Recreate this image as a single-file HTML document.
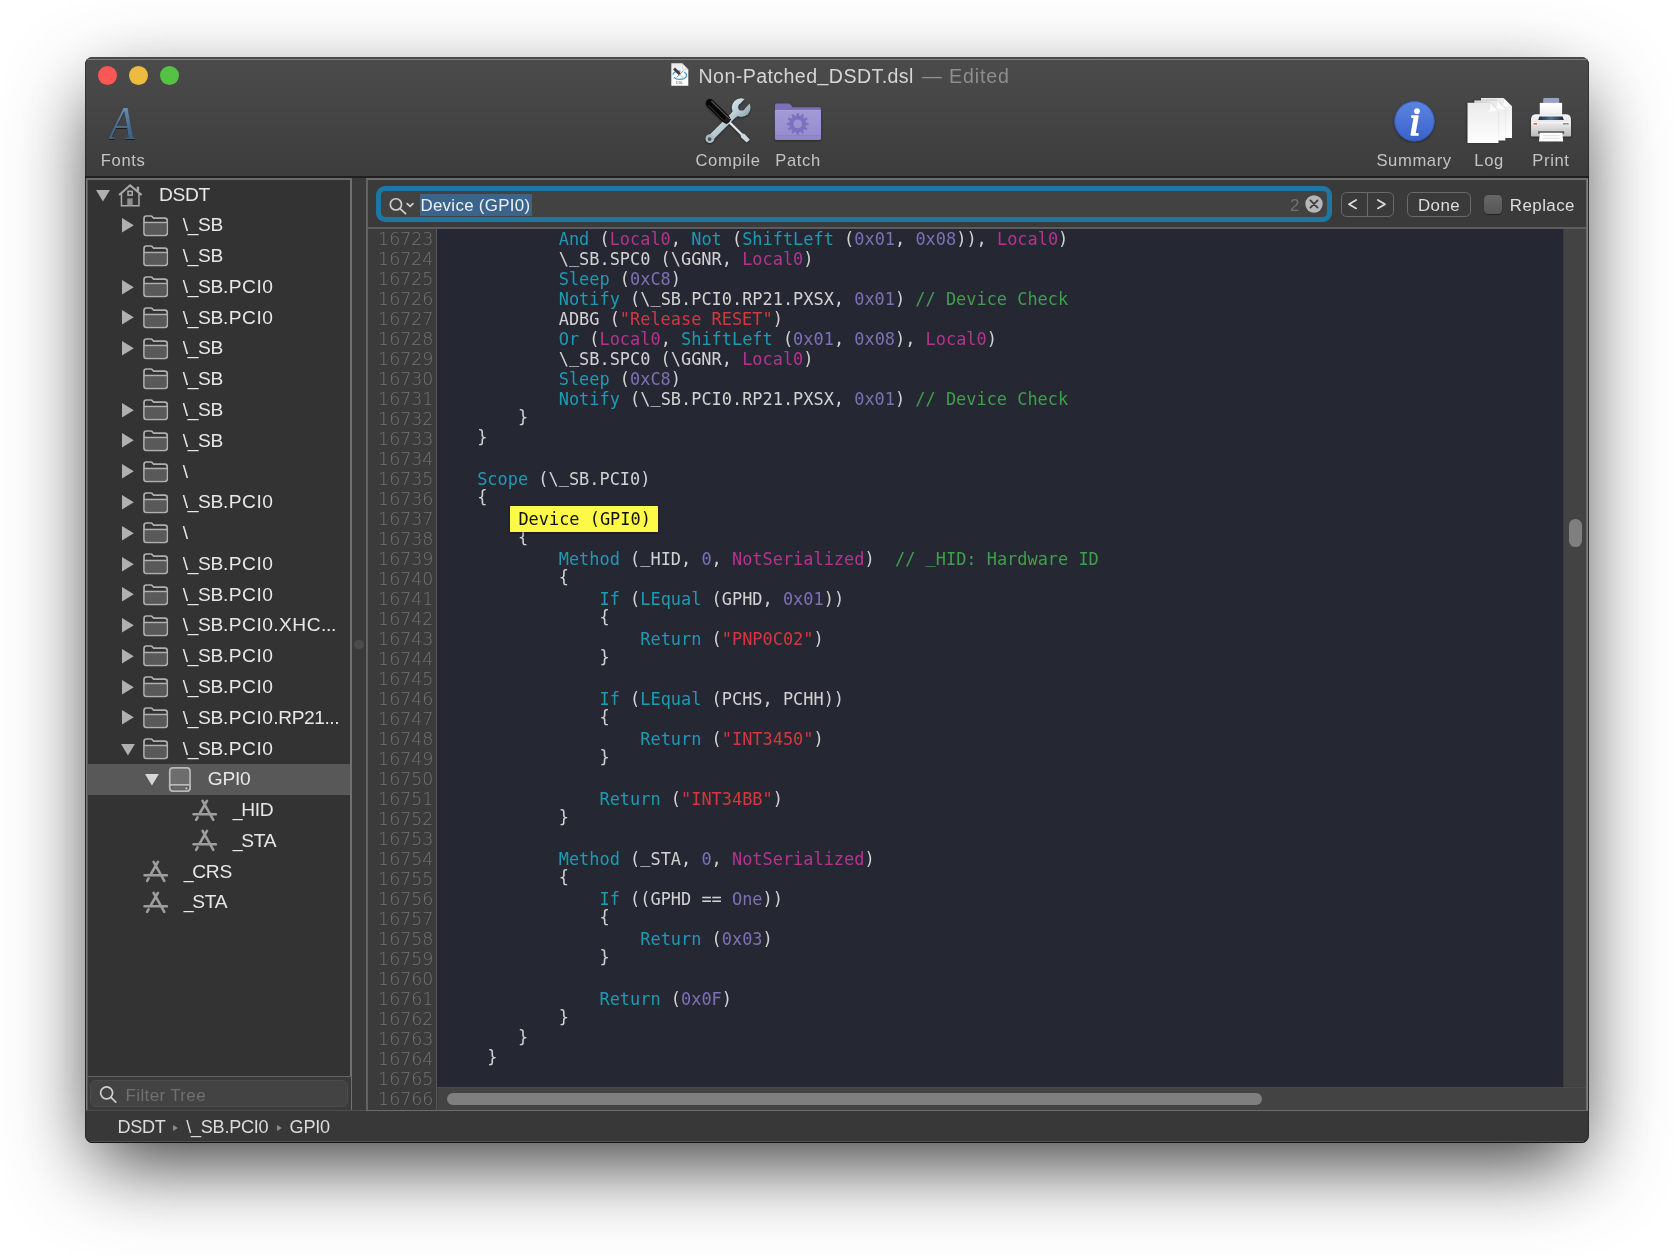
<!DOCTYPE html><html><head><meta charset="utf-8"><title>Non-Patched_DSDT.dsl</title><style>
*{box-sizing:border-box;margin:0;padding:0}
html,body{width:1674px;height:1256px;overflow:hidden;background:#fff}
body{font-family:"Liberation Sans",sans-serif;position:relative;-webkit-font-smoothing:antialiased}
#win{position:absolute;left:84.8px;top:57.2px;width:1504.3px;height:1085.6px;border-radius:7.5px;
 background:#3a3a3a;overflow:hidden;will-change:transform}
#shadow{position:absolute;left:84.8px;top:57.2px;width:1504.3px;height:1085.6px;border-radius:7.5px;
 box-shadow:0 28px 76px -10px rgba(0,0,0,.8)}
#edge{position:absolute;left:0;top:0;right:0;bottom:0;border-radius:7.5px;border:1.1px solid rgba(0,0,0,.28);border-top-color:rgba(0,0,0,.05);border-bottom:1.2px solid rgba(0,0,0,.62);pointer-events:none}
#edge:before{content:"";position:absolute;left:4px;right:4px;bottom:0;height:1px;background:rgba(255,255,255,.13)}
.abs{position:absolute}
#chrome{position:absolute;left:0;top:0;width:100%;height:120px;background:linear-gradient(#4b4b4b 0,#474747 30%,#3c3c3c 100%)}
#chrome:before{content:"";position:absolute;left:0;top:1.7px;right:0;height:1.3px;background:#7c7c7c}
.tl{position:absolute;width:19.2px;height:19.2px;border-radius:50%;top:8.6px;margin-left:-.3px}
.lbl{position:absolute;font-size:16.6px;color:#c4c4c4;white-space:nowrap;letter-spacing:.62px;transform:translateX(-50%);margin-left:.3px}
#title{position:absolute;top:8px;font-size:19.6px;color:#d6d6d6;white-space:nowrap;letter-spacing:.42px}
#title span{color:#8e8e8e;letter-spacing:.85px;margin-left:2.6px}
#title i{font-style:normal;position:relative;top:-2.2px}
/* sidebar */
#side{position:absolute;left:2.7px;top:122.8px;width:263.3px;height:896px;background:#333;}
.row{position:absolute;left:0;width:100%;height:30.78px}
.row .t{position:absolute;top:4.9px;font-size:19.2px;color:#e8e8e8;white-space:nowrap;letter-spacing:-.3px}
.row svg{position:absolute}
.row .w{letter-spacing:.45px}
.row .u{display:inline-block;width:9.6px;transform:scaleX(.92);transform-origin:100% 50%}
.row .w2{letter-spacing:-.45px}
/* code */
#code{position:absolute;background:#252832}
.ln{position:absolute;left:0;height:20px;line-height:20px;font-family:"DejaVu Sans Mono","Liberation Mono",monospace;font-size:16.93px;color:#d2d2d2;white-space:pre}
.ln u{text-decoration:none;position:relative;top:-1.7px}
.k{color:#1d9bb5}.m{color:#b5338f}.n{color:#7d70b6}.s{color:#d5373f}.c{color:#3f9f4c}
.g{position:absolute;right:2.3px;height:20px;line-height:20px;font-family:'DejaVu Sans',sans-serif;font-weight:200;font-size:17.4px;color:#737373;white-space:nowrap}
</style></head><body>
<div id="shadow"></div><div id="win">
<div id="chrome">
<div class="tl" style="left:13.5px;background:#fc5753"></div>
<div class="tl" style="left:44.2px;background:#ecbb3f"></div>
<div class="tl" style="left:75.0px;background:#54c242"></div>
<div id="title" style="left:613.5px">Non-Patched<i>_</i>DSDT.dsl <span>— Edited</span></div>
<div class="lbl" style="left:37.8px;top:94.1px">Fonts</div>
<div class="lbl" style="left:642.8px;top:94.1px">Compile</div>
<div class="lbl" style="left:712.8px;top:94.1px">Patch</div>
<div class="lbl" style="left:1328.8px;top:94.1px">Summary</div>
<div class="lbl" style="left:1403.8px;top:94.1px">Log</div>
<div class="lbl" style="left:1465.7px;top:94.1px">Print</div>
<div class="abs" style="left:24.0px;top:42.5px;font-family:'Liberation Serif',serif;font-style:italic;font-size:46.4px;line-height:48px;transform:scaleX(.93);transform-origin:0 0;background:linear-gradient(#7193b2 12%,#466c8f 55%,#3a5d7f 90%);-webkit-background-clip:text;background-clip:text;color:transparent;filter:drop-shadow(0 1px 0.6px rgba(0,0,0,.55))">A</div>
<svg class="abs" style="left:585.9px;top:6.2px" width="18" height="23" viewBox="0 0 18 23"><defs><linearGradient id="dg" x1="0" y1="0" x2="0" y2="1"><stop offset="0" stop-color="#e9e9e9"/><stop offset=".5" stop-color="#fafafa"/><stop offset="1" stop-color="#fff"/></linearGradient></defs><path d="M.3 .3H11.2L17.3 6.4V22.7H.3Z" fill="url(#dg)"/><path d="M11.2 .3V6.4H17.3Z" fill="#d0d0d0"/><path d="M11.8 1.8V5.8H15.8Z" fill="#f6f6f6"/><ellipse cx="8.7" cy="12.2" rx="6.9" ry="4.2" fill="none" stroke="#3f97d6" stroke-width="1.25" stroke-dasharray="15 3 9 4"/><path d="M3 5.6L9.2 11.4" stroke="#3d3d3d" stroke-width="2.8" stroke-linecap="butt"/><path d="M12.6 7.6L5.6 14.4" stroke="#9a9a9a" stroke-width="1"/><path d="M9.2 12L13.4 16" stroke="#b0b0b0" stroke-width=".8"/><text x="8.7" y="20.6" font-family="Liberation Sans,sans-serif" font-size="3.6" font-weight="bold" fill="#9a9a9a" text-anchor="middle">DSL</text></svg>
<svg class="abs" style="left:619.2px;top:39.8px" width="48" height="48" viewBox="704 97 48 48"><defs><linearGradient id="wg" x1="0" y1="0" x2="1" y2="1"><stop offset="0" stop-color="#d9e8ee"/><stop offset=".55" stop-color="#b6c9d1"/><stop offset="1" stop-color="#8297a1"/></linearGradient><linearGradient id="sg" x1="0" y1="1" x2="1" y2="0"><stop offset="0" stop-color="#8d9aa0"/><stop offset=".5" stop-color="#e4ecef"/><stop offset="1" stop-color="#9aa7ad"/></linearGradient><mask id="wm"><rect x="700" y="90" width="60" height="60" fill="#fff"/><path d="M738.85 105.13L748.26 95.04L753.23 99.68L743.82 109.77Z" fill="#000"/><circle cx="741.61" cy="107.16" r="3.4" fill="#000"/></mask></defs><g filter="drop-shadow(0 1px 0.8px rgba(0,0,0,.45))"><path d="M710 138.6L735.4 113.4" stroke="url(#wg)" stroke-width="6.2" stroke-linecap="round" fill="none"/><path d="M731.6 112.6L736.6 108.4L740.6 112.6L736.4 117.4Z" fill="url(#wg)"/><circle cx="741.2" cy="107.6" r="9.4" fill="url(#wg)" mask="url(#wm)"/><circle cx="709.9" cy="138.7" r="4.4" fill="#a9bcc4"/><circle cx="709.6" cy="139.1" r="1.9" fill="#4a4f52"/><path d="M728.6 121.4L742.6 135.2" stroke="url(#sg)" stroke-width="2.3" fill="none"/><path d="M740.61 134.97L741.23 137.45L746.62 142.52L749.83 139.80L744.65 134.09L742.19 133.43Z" fill="#cfd8dc"/><path d="M710 103.2L726.2 119.2" stroke="#050505" stroke-width="8.4" stroke-linecap="round" fill="none"/><path d="M711.8 101.4L727.6 117" stroke="#4a4a4a" stroke-width="1.5" stroke-linecap="round" fill="none"/><path d="M708.6 105.4L723.8 120.6" stroke="#2c2c2c" stroke-width="1.2" stroke-linecap="round" fill="none"/><path d="M725.6 118.6L728.8 121.8" stroke="#1c1c1c" stroke-width="6.6" stroke-linecap="butt" fill="none"/><path d="M726.2 115.2L730 119" stroke="#5e5e5e" stroke-width="1" fill="none"/></g></svg>
<svg class="abs" style="left:688.2px;top:43.8px" width="50" height="42" viewBox="773 101 50 42"><defs><linearGradient id="pf" x1="0" y1="0" x2="0" y2="1"><stop offset="0" stop-color="#a299d6"/><stop offset=".8" stop-color="#978ecf"/><stop offset="1" stop-color="#8c82c6"/></linearGradient></defs><g filter="drop-shadow(0 1px 0.8px rgba(0,0,0,.4))"><path d="M774.9 105.6Q774.9 103.6 776.9 103.6H788.6Q789.8 103.6 790.6 104.6L792.6 107.3H819.2Q821 107.3 821 109.1V120H774.9Z" fill="#7c70b6"/><rect x="774.9" y="110" width="46.1" height="30.1" rx="1.6" fill="url(#pf)"/><rect x="774.9" y="110" width="46.1" height="1" fill="#aaa2dc" opacity=".8"/><rect x="774.9" y="135.2" width="46.1" height="1" fill="#857bc2" opacity=".7"/></g><path d="M806.00 122.60L808.56 122.92L808.56 124.88L806.00 125.20L805.54 126.93L807.59 128.48L806.61 130.18L804.24 129.17L802.97 130.44L803.98 132.81L802.28 133.79L800.73 131.74L799.00 132.20L798.68 134.76L796.72 134.76L796.40 132.20L794.67 131.74L793.12 133.79L791.42 132.81L792.43 130.44L791.16 129.17L788.79 130.18L787.81 128.48L789.86 126.93L789.40 125.20L786.84 124.88L786.84 122.92L789.40 122.60L789.86 120.87L787.81 119.32L788.79 117.62L791.16 118.63L792.43 117.36L791.42 114.99L793.12 114.01L794.67 116.06L796.40 115.60L796.72 113.04L798.68 113.04L799.00 115.60L800.73 116.06L802.28 114.01L803.98 114.99L802.97 117.36L804.24 118.63L806.61 117.62L807.59 119.32L805.54 120.87Z" fill="#7c71be"/><circle cx="797.7" cy="123.9" r="4.3" fill="#9c93d2"/></svg>
<svg class="abs" style="left:1307.2px;top:41.8px" width="44" height="44" viewBox="1392 99 44 44"><defs><linearGradient id="sb" x1="0" y1="0" x2="0" y2="1"><stop offset="0" stop-color="#5c85df"/><stop offset=".55" stop-color="#4972d6"/><stop offset="1" stop-color="#3a61c6"/></linearGradient></defs><circle cx="1414.5" cy="121.3" r="20.2" fill="url(#sb)" filter="drop-shadow(0 1px 0.8px rgba(0,0,0,.45))"/><circle cx="1414.5" cy="121.3" r="19.7" fill="none" stroke="#2f4fae" stroke-width="1" opacity=".7"/><text x="1414.6" y="135.2" font-family="Liberation Serif,serif" font-style="italic" font-size="41" fill="#fff" stroke="#fff" stroke-width="1.5" stroke-linejoin="round" text-anchor="middle">i</text></svg>
<svg class="abs" style="left:1380.2px;top:37.8px" width="50" height="50" viewBox="1465 95 50 50"><defs><linearGradient id="lp" x1="0" y1="0" x2="0" y2="1"><stop offset="0" stop-color="#eaeaea"/><stop offset=".6" stop-color="#f6f6f6"/><stop offset="1" stop-color="#ffffff"/></linearGradient></defs><g filter="drop-shadow(0 .8px .7px rgba(0,0,0,.4))"><path d="M1481.0 97.9H1503.4L1512.0 106.5V138.1H1481.0Z" fill="url(#lp)"/><path d="M1503.4 97.9V106.5H1512.0Z" fill="#cfcfcf"/><path d="M1503.4 97.9Q1504.6 103.9 1501.2 107.1L1512.0 106.5Z" fill="#fbfbfb"/></g><g filter="drop-shadow(-.6px .6px .9px rgba(0,0,0,.35))"><path d="M1474.3 100.4H1496.7L1505.3 109.0V140.6H1474.3Z" fill="url(#lp)"/><path d="M1496.7 100.4V109.0H1505.3Z" fill="#cfcfcf"/><path d="M1496.7 100.4Q1497.9 106.4 1494.5 109.6L1505.3 109.0Z" fill="#fbfbfb"/></g><g filter="drop-shadow(-.6px .6px .9px rgba(0,0,0,.35))"><path d="M1467.5 102.7H1489.9L1498.5 111.3V142.9H1467.5Z" fill="url(#lp)"/><path d="M1489.9 102.7V111.3H1498.5Z" fill="#cfcfcf"/><path d="M1489.9 102.7Q1491.1 108.7 1487.7 111.9L1498.5 111.3Z" fill="#fbfbfb"/></g></svg>
<svg class="abs" style="left:1443.2px;top:37.8px" width="46" height="50" viewBox="1528 95 46 50"><defs><linearGradient id="pb" x1="0" y1="0" x2="0" y2="1"><stop offset="0" stop-color="#f4f4f4"/><stop offset=".45" stop-color="#e6e6e6"/><stop offset="1" stop-color="#b9b9b9"/></linearGradient><linearGradient id="pp" x1="0" y1="0" x2="0" y2="1"><stop offset="0" stop-color="#ffffff"/><stop offset="1" stop-color="#ececec"/></linearGradient><linearGradient id="ps" x1="0" y1="0" x2="1" y2="0"><stop offset="0" stop-color="#1e2a40"/><stop offset=".5" stop-color="#51709a"/><stop offset="1" stop-color="#1e2a40"/></linearGradient></defs><rect x="1543.2" y="98" width="16" height="6" rx="1" fill="#96a3c2"/><rect x="1539.8" y="102.9" width="22.3" height="15" fill="url(#pp)"/><g filter="drop-shadow(0 1px .8px rgba(0,0,0,.4))"><path d="M1531 135.4V119.4Q1531 114.2 1536.4 114.2H1565.6Q1571 114.2 1571 119.4V135.4Q1571 136.6 1569.8 136.6H1532.2Q1531 136.6 1531 135.4Z" fill="url(#pb)"/></g><path d="M1539.4 116.5H1562.6L1563.8 120H1538.2Z" fill="url(#ps)"/><rect x="1531.4" y="122.2" width="39.2" height="1" fill="#fff" opacity=".7"/><rect x="1533.6" y="123.2" width="3.4" height="1.3" fill="#e8472c"/><rect x="1563" y="123.3" width="5.6" height="1.1" fill="#6b6b6b"/><rect x="1538" y="131.2" width="26.2" height="2.6" fill="#5c5c5c"/><path d="M1539.8 132.8H1562.4L1563.2 141.4H1539Z" fill="#fcfcfc" filter="drop-shadow(0 .8px .6px rgba(0,0,0,.35))"/><path d="M1543 135.6H1559.6M1543 138.4H1559.6" stroke="#dcdcdc" stroke-width=".9"/></svg>
</div>
<div class="abs" style="left:0;top:119.3px;width:100%;height:1.9px;background:#202020"></div>
<div id="side">
<div class="row" style="top:-1.20px">
<svg style="left:8.7px;top:11.2px" width="14" height="12" viewBox="0 0 14 12"><path d="M0 0H13.9L6.95 11.6Z" fill="#b0b0b0"/></svg>
<svg style="left:30.7px;top:5.2px" width="25" height="23.1" viewBox="0 0 26 24" fill="none" stroke="#ababab" stroke-width="1.6"><path d="M1.2 11.4L12.6 1.4L24.6 11.4" stroke-width="2.1"/><path d="M20.7 7.4V2.8" stroke-width="2.4"/><path d="M3.6 10V22.6H21.8V10"/><rect x="10.4" y="7.6" width="4.4" height="4"/><rect x="9.6" y="15" width="5.6" height="7.4" fill="#8e8e8e" stroke="none"/></svg>
<div class="t" style="left:71.3px">DSDT</div>
</div>
<div class="row" style="top:29.58px">
<svg style="left:34.6px;top:8.6px" width="12" height="15" viewBox="0 0 12 15"><path d="M0 0L11.8 7.2L0 14.4Z" fill="#b0b0b0"/></svg>
<svg style="left:55.1px;top:5.2px" width="26" height="22" viewBox="0 0 26 22"><path d="M1 3.4Q1 1 3.4 1H7.6Q8.9 1 9.6 2L10.6 3.2H21.8Q24.2 3.2 24.2 5.6V17.9Q24.2 20.3 21.8 20.3H3.4Q1 20.3 1 17.9Z" fill="#333" stroke="#b0b0b0" stroke-width="1.7"/><path d="M1.8 8.2H23.4V17.6Q23.4 19.5 21.6 19.5H3.6Q1.8 19.5 1.8 17.6Z" fill="#595959"/><path d="M1 7.5H24.2" stroke="#b0b0b0" stroke-width="1.6"/></svg>
<div class="t" style="left:95.0px">\_SB</div>
</div>
<div class="row" style="top:60.36px">
<svg style="left:55.1px;top:5.2px" width="26" height="22" viewBox="0 0 26 22"><path d="M1 3.4Q1 1 3.4 1H7.6Q8.9 1 9.6 2L10.6 3.2H21.8Q24.2 3.2 24.2 5.6V17.9Q24.2 20.3 21.8 20.3H3.4Q1 20.3 1 17.9Z" fill="#333" stroke="#b0b0b0" stroke-width="1.7"/><path d="M1.8 8.2H23.4V17.6Q23.4 19.5 21.6 19.5H3.6Q1.8 19.5 1.8 17.6Z" fill="#595959"/><path d="M1 7.5H24.2" stroke="#b0b0b0" stroke-width="1.6"/></svg>
<div class="t" style="left:95.0px">\_SB</div>
</div>
<div class="row" style="top:91.14px">
<svg style="left:34.6px;top:8.6px" width="12" height="15" viewBox="0 0 12 15"><path d="M0 0L11.8 7.2L0 14.4Z" fill="#b0b0b0"/></svg>
<svg style="left:55.1px;top:5.2px" width="26" height="22" viewBox="0 0 26 22"><path d="M1 3.4Q1 1 3.4 1H7.6Q8.9 1 9.6 2L10.6 3.2H21.8Q24.2 3.2 24.2 5.6V17.9Q24.2 20.3 21.8 20.3H3.4Q1 20.3 1 17.9Z" fill="#333" stroke="#b0b0b0" stroke-width="1.7"/><path d="M1.8 8.2H23.4V17.6Q23.4 19.5 21.6 19.5H3.6Q1.8 19.5 1.8 17.6Z" fill="#595959"/><path d="M1 7.5H24.2" stroke="#b0b0b0" stroke-width="1.6"/></svg>
<div class="t" style="left:95.0px">\_SB<span class="w">.PCI0</span></div>
</div>
<div class="row" style="top:121.92px">
<svg style="left:34.6px;top:8.6px" width="12" height="15" viewBox="0 0 12 15"><path d="M0 0L11.8 7.2L0 14.4Z" fill="#b0b0b0"/></svg>
<svg style="left:55.1px;top:5.2px" width="26" height="22" viewBox="0 0 26 22"><path d="M1 3.4Q1 1 3.4 1H7.6Q8.9 1 9.6 2L10.6 3.2H21.8Q24.2 3.2 24.2 5.6V17.9Q24.2 20.3 21.8 20.3H3.4Q1 20.3 1 17.9Z" fill="#333" stroke="#b0b0b0" stroke-width="1.7"/><path d="M1.8 8.2H23.4V17.6Q23.4 19.5 21.6 19.5H3.6Q1.8 19.5 1.8 17.6Z" fill="#595959"/><path d="M1 7.5H24.2" stroke="#b0b0b0" stroke-width="1.6"/></svg>
<div class="t" style="left:95.0px">\_SB<span class="w">.PCI0</span></div>
</div>
<div class="row" style="top:152.70px">
<svg style="left:34.6px;top:8.6px" width="12" height="15" viewBox="0 0 12 15"><path d="M0 0L11.8 7.2L0 14.4Z" fill="#b0b0b0"/></svg>
<svg style="left:55.1px;top:5.2px" width="26" height="22" viewBox="0 0 26 22"><path d="M1 3.4Q1 1 3.4 1H7.6Q8.9 1 9.6 2L10.6 3.2H21.8Q24.2 3.2 24.2 5.6V17.9Q24.2 20.3 21.8 20.3H3.4Q1 20.3 1 17.9Z" fill="#333" stroke="#b0b0b0" stroke-width="1.7"/><path d="M1.8 8.2H23.4V17.6Q23.4 19.5 21.6 19.5H3.6Q1.8 19.5 1.8 17.6Z" fill="#595959"/><path d="M1 7.5H24.2" stroke="#b0b0b0" stroke-width="1.6"/></svg>
<div class="t" style="left:95.0px">\_SB</div>
</div>
<div class="row" style="top:183.48px">
<svg style="left:55.1px;top:5.2px" width="26" height="22" viewBox="0 0 26 22"><path d="M1 3.4Q1 1 3.4 1H7.6Q8.9 1 9.6 2L10.6 3.2H21.8Q24.2 3.2 24.2 5.6V17.9Q24.2 20.3 21.8 20.3H3.4Q1 20.3 1 17.9Z" fill="#333" stroke="#b0b0b0" stroke-width="1.7"/><path d="M1.8 8.2H23.4V17.6Q23.4 19.5 21.6 19.5H3.6Q1.8 19.5 1.8 17.6Z" fill="#595959"/><path d="M1 7.5H24.2" stroke="#b0b0b0" stroke-width="1.6"/></svg>
<div class="t" style="left:95.0px">\_SB</div>
</div>
<div class="row" style="top:214.26px">
<svg style="left:34.6px;top:8.6px" width="12" height="15" viewBox="0 0 12 15"><path d="M0 0L11.8 7.2L0 14.4Z" fill="#b0b0b0"/></svg>
<svg style="left:55.1px;top:5.2px" width="26" height="22" viewBox="0 0 26 22"><path d="M1 3.4Q1 1 3.4 1H7.6Q8.9 1 9.6 2L10.6 3.2H21.8Q24.2 3.2 24.2 5.6V17.9Q24.2 20.3 21.8 20.3H3.4Q1 20.3 1 17.9Z" fill="#333" stroke="#b0b0b0" stroke-width="1.7"/><path d="M1.8 8.2H23.4V17.6Q23.4 19.5 21.6 19.5H3.6Q1.8 19.5 1.8 17.6Z" fill="#595959"/><path d="M1 7.5H24.2" stroke="#b0b0b0" stroke-width="1.6"/></svg>
<div class="t" style="left:95.0px">\_SB</div>
</div>
<div class="row" style="top:245.04px">
<svg style="left:34.6px;top:8.6px" width="12" height="15" viewBox="0 0 12 15"><path d="M0 0L11.8 7.2L0 14.4Z" fill="#b0b0b0"/></svg>
<svg style="left:55.1px;top:5.2px" width="26" height="22" viewBox="0 0 26 22"><path d="M1 3.4Q1 1 3.4 1H7.6Q8.9 1 9.6 2L10.6 3.2H21.8Q24.2 3.2 24.2 5.6V17.9Q24.2 20.3 21.8 20.3H3.4Q1 20.3 1 17.9Z" fill="#333" stroke="#b0b0b0" stroke-width="1.7"/><path d="M1.8 8.2H23.4V17.6Q23.4 19.5 21.6 19.5H3.6Q1.8 19.5 1.8 17.6Z" fill="#595959"/><path d="M1 7.5H24.2" stroke="#b0b0b0" stroke-width="1.6"/></svg>
<div class="t" style="left:95.0px">\_SB</div>
</div>
<div class="row" style="top:275.82px">
<svg style="left:34.6px;top:8.6px" width="12" height="15" viewBox="0 0 12 15"><path d="M0 0L11.8 7.2L0 14.4Z" fill="#b0b0b0"/></svg>
<svg style="left:55.1px;top:5.2px" width="26" height="22" viewBox="0 0 26 22"><path d="M1 3.4Q1 1 3.4 1H7.6Q8.9 1 9.6 2L10.6 3.2H21.8Q24.2 3.2 24.2 5.6V17.9Q24.2 20.3 21.8 20.3H3.4Q1 20.3 1 17.9Z" fill="#333" stroke="#b0b0b0" stroke-width="1.7"/><path d="M1.8 8.2H23.4V17.6Q23.4 19.5 21.6 19.5H3.6Q1.8 19.5 1.8 17.6Z" fill="#595959"/><path d="M1 7.5H24.2" stroke="#b0b0b0" stroke-width="1.6"/></svg>
<div class="t" style="left:95.0px">\</div>
</div>
<div class="row" style="top:306.60px">
<svg style="left:34.6px;top:8.6px" width="12" height="15" viewBox="0 0 12 15"><path d="M0 0L11.8 7.2L0 14.4Z" fill="#b0b0b0"/></svg>
<svg style="left:55.1px;top:5.2px" width="26" height="22" viewBox="0 0 26 22"><path d="M1 3.4Q1 1 3.4 1H7.6Q8.9 1 9.6 2L10.6 3.2H21.8Q24.2 3.2 24.2 5.6V17.9Q24.2 20.3 21.8 20.3H3.4Q1 20.3 1 17.9Z" fill="#333" stroke="#b0b0b0" stroke-width="1.7"/><path d="M1.8 8.2H23.4V17.6Q23.4 19.5 21.6 19.5H3.6Q1.8 19.5 1.8 17.6Z" fill="#595959"/><path d="M1 7.5H24.2" stroke="#b0b0b0" stroke-width="1.6"/></svg>
<div class="t" style="left:95.0px">\_SB<span class="w">.PCI0</span></div>
</div>
<div class="row" style="top:337.38px">
<svg style="left:34.6px;top:8.6px" width="12" height="15" viewBox="0 0 12 15"><path d="M0 0L11.8 7.2L0 14.4Z" fill="#b0b0b0"/></svg>
<svg style="left:55.1px;top:5.2px" width="26" height="22" viewBox="0 0 26 22"><path d="M1 3.4Q1 1 3.4 1H7.6Q8.9 1 9.6 2L10.6 3.2H21.8Q24.2 3.2 24.2 5.6V17.9Q24.2 20.3 21.8 20.3H3.4Q1 20.3 1 17.9Z" fill="#333" stroke="#b0b0b0" stroke-width="1.7"/><path d="M1.8 8.2H23.4V17.6Q23.4 19.5 21.6 19.5H3.6Q1.8 19.5 1.8 17.6Z" fill="#595959"/><path d="M1 7.5H24.2" stroke="#b0b0b0" stroke-width="1.6"/></svg>
<div class="t" style="left:95.0px">\</div>
</div>
<div class="row" style="top:368.16px">
<svg style="left:34.6px;top:8.6px" width="12" height="15" viewBox="0 0 12 15"><path d="M0 0L11.8 7.2L0 14.4Z" fill="#b0b0b0"/></svg>
<svg style="left:55.1px;top:5.2px" width="26" height="22" viewBox="0 0 26 22"><path d="M1 3.4Q1 1 3.4 1H7.6Q8.9 1 9.6 2L10.6 3.2H21.8Q24.2 3.2 24.2 5.6V17.9Q24.2 20.3 21.8 20.3H3.4Q1 20.3 1 17.9Z" fill="#333" stroke="#b0b0b0" stroke-width="1.7"/><path d="M1.8 8.2H23.4V17.6Q23.4 19.5 21.6 19.5H3.6Q1.8 19.5 1.8 17.6Z" fill="#595959"/><path d="M1 7.5H24.2" stroke="#b0b0b0" stroke-width="1.6"/></svg>
<div class="t" style="left:95.0px">\_SB<span class="w">.PCI0</span></div>
</div>
<div class="row" style="top:398.94px">
<svg style="left:34.6px;top:8.6px" width="12" height="15" viewBox="0 0 12 15"><path d="M0 0L11.8 7.2L0 14.4Z" fill="#b0b0b0"/></svg>
<svg style="left:55.1px;top:5.2px" width="26" height="22" viewBox="0 0 26 22"><path d="M1 3.4Q1 1 3.4 1H7.6Q8.9 1 9.6 2L10.6 3.2H21.8Q24.2 3.2 24.2 5.6V17.9Q24.2 20.3 21.8 20.3H3.4Q1 20.3 1 17.9Z" fill="#333" stroke="#b0b0b0" stroke-width="1.7"/><path d="M1.8 8.2H23.4V17.6Q23.4 19.5 21.6 19.5H3.6Q1.8 19.5 1.8 17.6Z" fill="#595959"/><path d="M1 7.5H24.2" stroke="#b0b0b0" stroke-width="1.6"/></svg>
<div class="t" style="left:95.0px">\_SB<span class="w">.PCI0</span></div>
</div>
<div class="row" style="top:429.72px">
<svg style="left:34.6px;top:8.6px" width="12" height="15" viewBox="0 0 12 15"><path d="M0 0L11.8 7.2L0 14.4Z" fill="#b0b0b0"/></svg>
<svg style="left:55.1px;top:5.2px" width="26" height="22" viewBox="0 0 26 22"><path d="M1 3.4Q1 1 3.4 1H7.6Q8.9 1 9.6 2L10.6 3.2H21.8Q24.2 3.2 24.2 5.6V17.9Q24.2 20.3 21.8 20.3H3.4Q1 20.3 1 17.9Z" fill="#333" stroke="#b0b0b0" stroke-width="1.7"/><path d="M1.8 8.2H23.4V17.6Q23.4 19.5 21.6 19.5H3.6Q1.8 19.5 1.8 17.6Z" fill="#595959"/><path d="M1 7.5H24.2" stroke="#b0b0b0" stroke-width="1.6"/></svg>
<div class="t" style="left:95.0px">\_SB<span class="w">.PCI0.XHC</span>...</div>
</div>
<div class="row" style="top:460.50px">
<svg style="left:34.6px;top:8.6px" width="12" height="15" viewBox="0 0 12 15"><path d="M0 0L11.8 7.2L0 14.4Z" fill="#b0b0b0"/></svg>
<svg style="left:55.1px;top:5.2px" width="26" height="22" viewBox="0 0 26 22"><path d="M1 3.4Q1 1 3.4 1H7.6Q8.9 1 9.6 2L10.6 3.2H21.8Q24.2 3.2 24.2 5.6V17.9Q24.2 20.3 21.8 20.3H3.4Q1 20.3 1 17.9Z" fill="#333" stroke="#b0b0b0" stroke-width="1.7"/><path d="M1.8 8.2H23.4V17.6Q23.4 19.5 21.6 19.5H3.6Q1.8 19.5 1.8 17.6Z" fill="#595959"/><path d="M1 7.5H24.2" stroke="#b0b0b0" stroke-width="1.6"/></svg>
<div class="t" style="left:95.0px">\_SB<span class="w">.PCI0</span></div>
</div>
<div class="row" style="top:491.28px">
<svg style="left:34.6px;top:8.6px" width="12" height="15" viewBox="0 0 12 15"><path d="M0 0L11.8 7.2L0 14.4Z" fill="#b0b0b0"/></svg>
<svg style="left:55.1px;top:5.2px" width="26" height="22" viewBox="0 0 26 22"><path d="M1 3.4Q1 1 3.4 1H7.6Q8.9 1 9.6 2L10.6 3.2H21.8Q24.2 3.2 24.2 5.6V17.9Q24.2 20.3 21.8 20.3H3.4Q1 20.3 1 17.9Z" fill="#333" stroke="#b0b0b0" stroke-width="1.7"/><path d="M1.8 8.2H23.4V17.6Q23.4 19.5 21.6 19.5H3.6Q1.8 19.5 1.8 17.6Z" fill="#595959"/><path d="M1 7.5H24.2" stroke="#b0b0b0" stroke-width="1.6"/></svg>
<div class="t" style="left:95.0px">\_SB<span class="w">.PCI0</span></div>
</div>
<div class="row" style="top:522.06px">
<svg style="left:34.6px;top:8.6px" width="12" height="15" viewBox="0 0 12 15"><path d="M0 0L11.8 7.2L0 14.4Z" fill="#b0b0b0"/></svg>
<svg style="left:55.1px;top:5.2px" width="26" height="22" viewBox="0 0 26 22"><path d="M1 3.4Q1 1 3.4 1H7.6Q8.9 1 9.6 2L10.6 3.2H21.8Q24.2 3.2 24.2 5.6V17.9Q24.2 20.3 21.8 20.3H3.4Q1 20.3 1 17.9Z" fill="#333" stroke="#b0b0b0" stroke-width="1.7"/><path d="M1.8 8.2H23.4V17.6Q23.4 19.5 21.6 19.5H3.6Q1.8 19.5 1.8 17.6Z" fill="#595959"/><path d="M1 7.5H24.2" stroke="#b0b0b0" stroke-width="1.6"/></svg>
<div class="t" style="left:95.0px">\_SB<span class="w">.PCI0</span><span class="w2">.RP21...</span></div>
</div>
<div class="row" style="top:552.84px">
<svg style="left:33.3px;top:11.2px" width="14" height="12" viewBox="0 0 14 12"><path d="M0 0H13.9L6.95 11.6Z" fill="#b0b0b0"/></svg>
<svg style="left:55.1px;top:5.2px" width="26" height="22" viewBox="0 0 26 22"><path d="M1 3.4Q1 1 3.4 1H7.6Q8.9 1 9.6 2L10.6 3.2H21.8Q24.2 3.2 24.2 5.6V17.9Q24.2 20.3 21.8 20.3H3.4Q1 20.3 1 17.9Z" fill="#333" stroke="#b0b0b0" stroke-width="1.7"/><path d="M1.8 8.2H23.4V17.6Q23.4 19.5 21.6 19.5H3.6Q1.8 19.5 1.8 17.6Z" fill="#595959"/><path d="M1 7.5H24.2" stroke="#b0b0b0" stroke-width="1.6"/></svg>
<div class="t" style="left:95.0px">\_SB<span class="w">.PCI0</span></div>
</div>
<div class="row" style="top:583.62px">
<div class="abs" style="left:0;top:.9px;width:100%;height:30.6px;background:#585858"></div>
<svg style="left:57.7px;top:10.3px" width="14" height="12" viewBox="0 0 14 12"><path d="M0 0H13.9L6.95 11.6Z" fill="#d6d6d6"/></svg>
<svg style="left:80.5px;top:2.4px" width="24" height="27" viewBox="0 0 24 27" fill="none" stroke="#b9b9b9" stroke-width="1.7"><rect x="1.75" y="1.85" width="20.3" height="23.3" rx="3.2" fill="#6d6d6d"/><path d="M1.8 18.8H22V21.6Q22 25.1 18.6 25.1H5.2Q1.8 25.1 1.8 21.6Z" fill="#575757"/><rect x="3.8" y="20.6" width="16.2" height="3" rx="1.2" fill="#6a6a6a" stroke="none"/><circle cx="18.4" cy="22.4" r="0.9" fill="#d8d8d8" stroke="none"/></svg>
<div class="t" style="left:120.1px">GPI0</div>
</div>
<div class="row" style="top:614.40px">
<svg style="left:104.3px;top:4.5px" width="25.4" height="22.6" viewBox="0 0 27 24" fill="none" stroke="#9e9e9e" stroke-width="2.7" stroke-linecap="round"><path d="M11.3 2L22.6 22.2M15.9 2L8.2 15.4M5.9 19.6L4.4 22.2M1.6 16.1H25.4"/></svg>
<div class="t" style="left:144.0px"><span class="u">_</span>HID</div>
</div>
<div class="row" style="top:645.18px">
<svg style="left:104.3px;top:4.5px" width="25.4" height="22.6" viewBox="0 0 27 24" fill="none" stroke="#9e9e9e" stroke-width="2.7" stroke-linecap="round"><path d="M11.3 2L22.6 22.2M15.9 2L8.2 15.4M5.9 19.6L4.4 22.2M1.6 16.1H25.4"/></svg>
<div class="t" style="left:144.0px"><span class="u">_</span>STA</div>
</div>
<div class="row" style="top:675.96px">
<svg style="left:55.2px;top:4.5px" width="25.4" height="22.6" viewBox="0 0 27 24" fill="none" stroke="#9e9e9e" stroke-width="2.7" stroke-linecap="round"><path d="M11.3 2L22.6 22.2M15.9 2L8.2 15.4M5.9 19.6L4.4 22.2M1.6 16.1H25.4"/></svg>
<div class="t" style="left:95.0px"><span class="u">_</span>CRS</div>
</div>
<div class="row" style="top:706.74px">
<svg style="left:55.2px;top:4.5px" width="25.4" height="22.6" viewBox="0 0 27 24" fill="none" stroke="#9e9e9e" stroke-width="2.7" stroke-linecap="round"><path d="M11.3 2L22.6 22.2M15.9 2L8.2 15.4M5.9 19.6L4.4 22.2M1.6 16.1H25.4"/></svg>
<div class="t" style="left:95.0px"><span class="u">_</span>STA</div>
</div>
</div>
<div class="abs" style="left:1.1px;top:122.4px;width:2.4px;height:930.9px;background:linear-gradient(90deg,#7e7e7e,#666 55%,#4a4a4a)"></div>
<div class="abs" style="left:265.4px;top:121.2px;width:2px;height:932.1px;background:#707070"></div>
<div class="abs" style="left:1.1px;top:121.2px;width:266.1px;height:1.7px;background:#6c6c6c"></div>
<div class="abs" style="left:1.8px;top:1018.8px;width:265.0px;height:1.4px;background:#656565"></div>
<div class="abs" style="left:3.1px;top:1020.2px;width:262.9px;height:33.0px;background:#3a3a3a"></div>
<div class="abs" style="left:5.1px;top:1023.4px;width:258.4px;height:26.9px;background:#434343;border:1px solid #4d4d4d;border-radius:6px"></div>
<svg class="abs" style="left:13.6px;top:1028.2px" width="20" height="20" viewBox="0 0 20 20" fill="none" stroke="#cfcfcf" stroke-width="1.7" stroke-linecap="round"><circle cx="7.6" cy="7.8" r="6"/><path d="M12 12.4L16.8 17.2"/></svg>
<div class="abs" style="left:40.6px;top:1028.9px;font-size:17px;color:#707070;letter-spacing:.35px;white-space:nowrap">Filter Tree</div>
<div class="abs" style="left:269.3px;top:582.8px;width:9.4px;height:9.4px;border-radius:50%;background:#4b4b4b"></div>
<div id="code" style="left:351.7px;top:171.8px;width:1126.7px;height:857.8px">
<div class="ln" style="top:0.0px;left:122.03px"><span class="k">And</span> (<span class="m">Local0</span>, <span class="k">Not</span> (<span class="k">ShiftLeft</span> (<span class="n">0x01</span>, <span class="n">0x08</span>)), <span class="m">Local0</span>)</div>
<div class="ln" style="top:20.0px;left:122.03px">\<u>_</u>SB.SPC0 (\GGNR, <span class="m">Local0</span>)</div>
<div class="ln" style="top:40.0px;left:122.03px"><span class="k">Sleep</span> (<span class="n">0xC8</span>)</div>
<div class="ln" style="top:60.0px;left:122.03px"><span class="k">Notify</span> (\<u>_</u>SB.PCI0.RP21.PXSX, <span class="n">0x01</span>) <span class="c">// Device Check</span></div>
<div class="ln" style="top:80.0px;left:122.03px">ADBG (<span class="s">"Release RESET"</span>)</div>
<div class="ln" style="top:100.0px;left:122.03px"><span class="k">Or</span> (<span class="m">Local0</span>, <span class="k">ShiftLeft</span> (<span class="n">0x01</span>, <span class="n">0x08</span>), <span class="m">Local0</span>)</div>
<div class="ln" style="top:120.0px;left:122.03px">\<u>_</u>SB.SPC0 (\GGNR, <span class="m">Local0</span>)</div>
<div class="ln" style="top:140.0px;left:122.03px"><span class="k">Sleep</span> (<span class="n">0xC8</span>)</div>
<div class="ln" style="top:160.0px;left:122.03px"><span class="k">Notify</span> (\<u>_</u>SB.PCI0.RP21.PXSX, <span class="n">0x01</span>) <span class="c">// Device Check</span></div>
<div class="ln" style="top:178.6px;left:81.25px">}</div>
<div class="ln" style="top:198.6px;left:40.48px">}</div>
<div class="ln" style="top:240.0px;left:40.48px"><span class="k">Scope</span> (\<u>_</u>SB.PCI0)</div>
<div class="ln" style="top:258.6px;left:40.48px">{</div>
<div class="ln" style="top:298.6px;left:81.25px">{</div>
<div class="ln" style="top:320.0px;left:122.03px"><span class="k">Method</span> (<u>_</u>HID, <span class="n">0</span>, <span class="m">NotSerialized</span>)  <span class="c">// <u>_</u>HID: Hardware ID</span></div>
<div class="ln" style="top:338.6px;left:122.03px">{</div>
<div class="ln" style="top:360.0px;left:162.80px"><span class="k">If</span> (<span class="k">LEqual</span> (GPHD, <span class="n">0x01</span>))</div>
<div class="ln" style="top:378.6px;left:162.80px">{</div>
<div class="ln" style="top:400.0px;left:203.58px"><span class="k">Return</span> (<span class="s">"PNP0C02"</span>)</div>
<div class="ln" style="top:418.6px;left:162.80px">}</div>
<div class="ln" style="top:460.0px;left:162.80px"><span class="k">If</span> (<span class="k">LEqual</span> (PCHS, PCHH))</div>
<div class="ln" style="top:478.6px;left:162.80px">{</div>
<div class="ln" style="top:500.0px;left:203.58px"><span class="k">Return</span> (<span class="s">"INT3450"</span>)</div>
<div class="ln" style="top:518.6px;left:162.80px">}</div>
<div class="ln" style="top:560.0px;left:162.80px"><span class="k">Return</span> (<span class="s">"INT34BB"</span>)</div>
<div class="ln" style="top:578.6px;left:122.03px">}</div>
<div class="ln" style="top:620.0px;left:122.03px"><span class="k">Method</span> (<u>_</u>STA, <span class="n">0</span>, <span class="m">NotSerialized</span>)</div>
<div class="ln" style="top:638.6px;left:122.03px">{</div>
<div class="ln" style="top:660.0px;left:162.80px"><span class="k">If</span> ((GPHD == <span class="n">One</span>))</div>
<div class="ln" style="top:678.6px;left:162.80px">{</div>
<div class="ln" style="top:700.0px;left:203.58px"><span class="k">Return</span> (<span class="n">0x03</span>)</div>
<div class="ln" style="top:718.6px;left:162.80px">}</div>
<div class="ln" style="top:760.0px;left:162.80px"><span class="k">Return</span> (<span class="n">0x0F</span>)</div>
<div class="ln" style="top:778.6px;left:122.03px">}</div>
<div class="ln" style="top:798.6px;left:81.25px">}</div>
<div class="ln" style="top:818.6px;left:50.67px">}</div>
<div class="abs" style="left:73.8px;top:277.2px;width:148px;height:26.4px;background:#fdfa47;border-radius:.5px;box-shadow:0 1px 3px rgba(0,0,0,.45)"></div>
<div class="ln" style="top:280.0px;left:81.70px;color:#101010">Device (GPI0)</div>
</div>
<div class="abs" style="left:281.1px;top:121.2px;width:1.5px;height:932.1px;background:#646464"></div>
<div class="abs" style="left:281.0px;top:121.2px;width:1222.2px;height:1.7px;background:#6c6c6c"></div>
<div class="abs" style="left:1500.9px;top:122.0px;width:2.4px;height:931.3px;background:linear-gradient(90deg,#5e5e5e,#7a7a7a 50%,#868686)"></div>
<div class="abs" style="left:282.7px;top:170.4px;width:1218.2px;height:1.3px;background:#5c5c5c"></div>
<div class="abs" id="gut" style="left:282.7px;top:171.7px;width:69.0px;height:881.5px;background:#3b3b3b;border-right:1.2px solid #585858;overflow:hidden">
<div class="g" style="top:0.7px">16723</div>
<div class="g" style="top:20.7px">16724</div>
<div class="g" style="top:40.7px">16725</div>
<div class="g" style="top:60.7px">16726</div>
<div class="g" style="top:80.7px">16727</div>
<div class="g" style="top:100.7px">16728</div>
<div class="g" style="top:120.7px">16729</div>
<div class="g" style="top:140.7px">16730</div>
<div class="g" style="top:160.7px">16731</div>
<div class="g" style="top:180.7px">16732</div>
<div class="g" style="top:200.7px">16733</div>
<div class="g" style="top:220.7px">16734</div>
<div class="g" style="top:240.7px">16735</div>
<div class="g" style="top:260.7px">16736</div>
<div class="g" style="top:280.7px">16737</div>
<div class="g" style="top:300.7px">16738</div>
<div class="g" style="top:320.7px">16739</div>
<div class="g" style="top:340.7px">16740</div>
<div class="g" style="top:360.7px">16741</div>
<div class="g" style="top:380.7px">16742</div>
<div class="g" style="top:400.7px">16743</div>
<div class="g" style="top:420.7px">16744</div>
<div class="g" style="top:440.7px">16745</div>
<div class="g" style="top:460.7px">16746</div>
<div class="g" style="top:480.7px">16747</div>
<div class="g" style="top:500.7px">16748</div>
<div class="g" style="top:520.7px">16749</div>
<div class="g" style="top:540.7px">16750</div>
<div class="g" style="top:560.7px">16751</div>
<div class="g" style="top:580.7px">16752</div>
<div class="g" style="top:600.7px">16753</div>
<div class="g" style="top:620.7px">16754</div>
<div class="g" style="top:640.7px">16755</div>
<div class="g" style="top:660.7px">16756</div>
<div class="g" style="top:680.7px">16757</div>
<div class="g" style="top:700.7px">16758</div>
<div class="g" style="top:720.7px">16759</div>
<div class="g" style="top:740.7px">16760</div>
<div class="g" style="top:760.7px">16761</div>
<div class="g" style="top:780.7px">16762</div>
<div class="g" style="top:800.7px">16763</div>
<div class="g" style="top:820.7px">16764</div>
<div class="g" style="top:840.7px">16765</div>
<div class="g" style="top:860.7px">16766</div>
</div>
<div class="abs" style="left:1478.4px;top:171.7px;width:22.5px;height:881.5px;background:#434343;border-left:1px solid #3a3b40"></div>
<div class="abs" style="left:352.9px;top:1029.6px;width:1148.0px;height:23.6px;background:#434343;border-top:1px solid #4b4b4b"></div>
<div class="abs" style="left:1484.3px;top:462.4px;width:12.8px;height:27.8px;border-radius:6.4px;background:#7f7f7f"></div>
<div class="abs" style="left:362.3px;top:1035.8px;width:814.9px;height:12.2px;border-radius:6.1px;background:#7f7f7f"></div>
<div class="abs" style="left:291.3px;top:128.8px;width:956.0px;height:36.6px;border-radius:9px;background:#1d76a4"></div>
<div class="abs" style="left:296.4px;top:134.0px;width:945.8px;height:26.2px;border-radius:4.5px;background:#424242"></div>
<svg class="abs" style="left:303.2px;top:138.8px" width="28" height="20" viewBox="0 0 28 20" fill="none" stroke="#d2d2d2" stroke-width="1.6" stroke-linecap="round"><circle cx="7.9" cy="8.4" r="5.6"/><path d="M12 12.6L17.6 17.6"/><path d="M19.2 7.6L22.1 10.4L25 7.6" stroke-width="1.7"/></svg>
<div class="abs" style="left:335.0px;top:137.1px;width:112.1px;height:21.7px;background:#3b648c"></div>
<div class="abs" style="left:335.4px;top:138.8px;font-size:16.9px;color:#f0f0f0;letter-spacing:.3px;white-space:nowrap">Device (GPI0)</div>
<div class="abs" style="left:1205.0px;top:138.8px;font-size:16.9px;color:#717171;white-space:nowrap">2</div>
<svg class="abs" style="left:1219.8px;top:138.4px" width="18" height="18" viewBox="0 0 18 18"><circle cx="9" cy="9" r="8.7" fill="#b6b6b6"/><path d="M5.4 5.4L12.6 12.6M12.6 5.4L5.4 12.6" stroke="#3c3c3c" stroke-width="1.8" stroke-linecap="round"/></svg>
<div class="abs" style="left:1255.8px;top:135.1px;width:53.6px;height:24.5px;border:1.5px solid #6a6a6a;border-radius:5.5px"></div>
<div class="abs" style="left:1282.0px;top:135.1px;width:1.2px;height:24.5px;background:#6b6b6b"></div>
<svg class="abs" style="left:1255.8px;top:135.1px" width="54" height="24" viewBox="0 0 54 24" fill="none" stroke="#dcdcdc" stroke-width="1.7" stroke-linecap="round" stroke-linejoin="round"><path d="M15.2 8L8 12.2L15.2 16.4"/><path d="M36.8 8L44 12.2L36.8 16.4"/></svg>
<div class="abs" style="left:1321.8px;top:135.1px;width:64.5px;height:24.5px;border:1.5px solid #6a6a6a;border-radius:5.5px"></div>
<div class="abs" style="left:1333.0px;top:138.8px;font-size:16.9px;color:#dcdcdc;letter-spacing:.4px;white-space:nowrap">Done</div>
<div class="abs" style="left:1398.5px;top:137.5px;width:18.8px;height:19px;border-radius:4.2px;background:linear-gradient(#676767,#565656);box-shadow:0 0.5px 1px rgba(0,0,0,.4)"></div>
<div class="abs" style="left:1424.8px;top:138.8px;font-size:16.9px;color:#dedede;letter-spacing:.45px;white-space:nowrap">Replace</div>
<div class="abs" style="left:0;top:1053.0px;width:100%;height:1.4px;background:#4e4e4e"></div>
<div class="abs" style="left:281.4px;top:1053.0px;width:1221.8px;height:1.4px;background:#6c6c6c"></div>
<div class="abs" style="left:0;top:1054.4px;width:100%;height:31.2px;background:#383838"></div>
<div class="abs" style="left:32.4px;top:1060.2px;font-size:18.1px;color:#dcdcdc;white-space:nowrap;letter-spacing:-.25px">DSDT</div>
<div class="abs" style="left:101.2px;top:1060.2px;font-size:18.1px;color:#dcdcdc;white-space:nowrap;letter-spacing:-.25px">\_SB.PCI0</div>
<div class="abs" style="left:204.6px;top:1060.2px;font-size:18.1px;color:#dcdcdc;white-space:nowrap;letter-spacing:-.25px">GPI0</div>
<svg class="abs" style="left:88.4px;top:1066.6px" width="6" height="8" viewBox="0 0 6 8"><path d="M0 1L5 4L0 7Z" fill="#8a8a8a"/></svg>
<svg class="abs" style="left:192.3px;top:1066.6px" width="6" height="8" viewBox="0 0 6 8"><path d="M0 1L5 4L0 7Z" fill="#8a8a8a"/></svg>
<div id="edge"></div></div></body></html>
